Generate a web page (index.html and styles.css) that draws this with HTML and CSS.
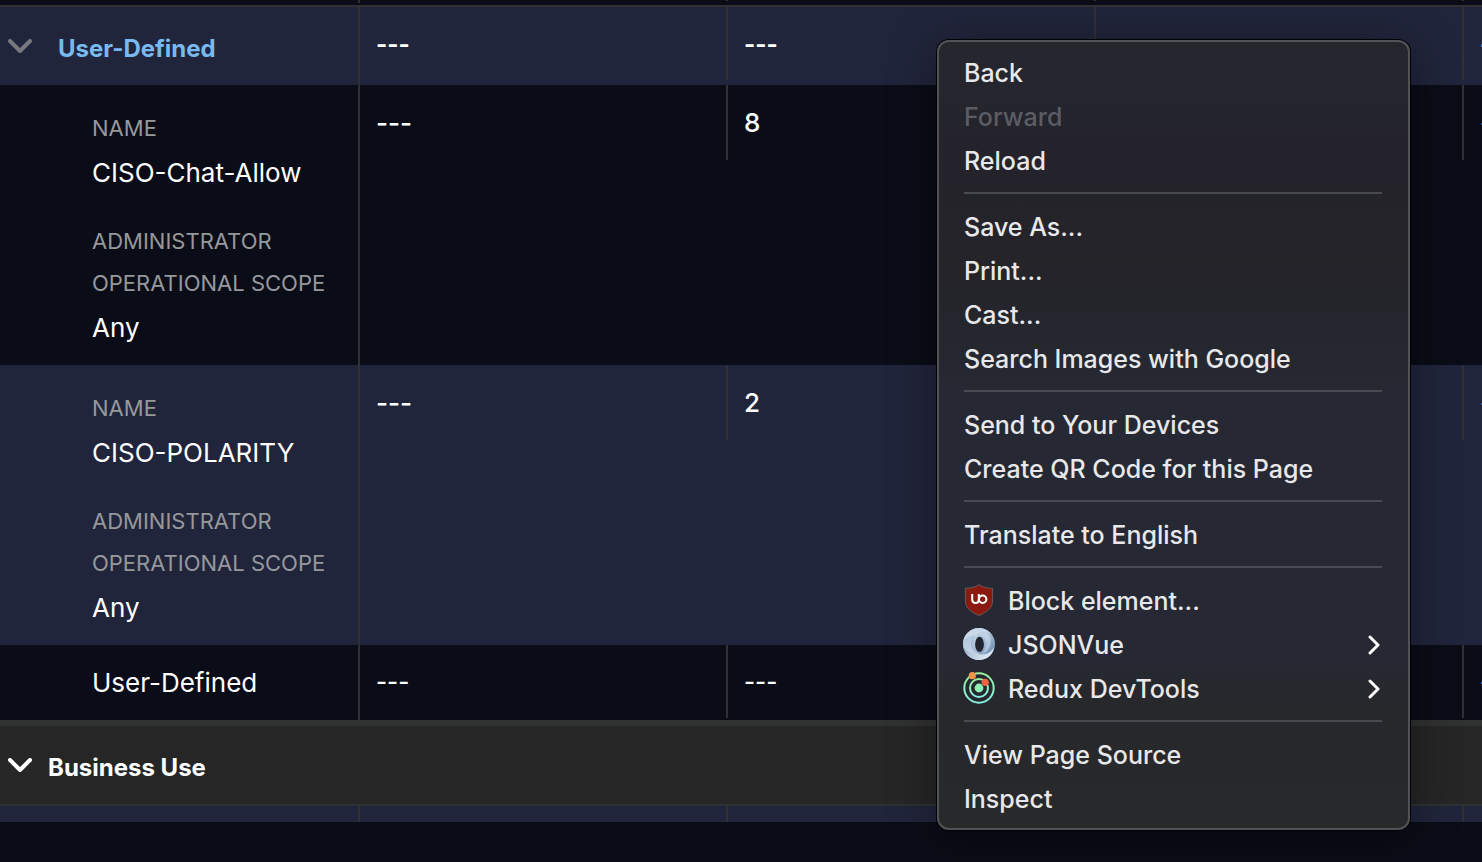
FILE: index.html
```html
<!DOCTYPE html>
<html lang="en">
<head>
<meta charset="utf-8">
<title>Policy Rules</title>
<link rel="stylesheet" href="styles.css">
</head>
<body>
<main class="viewport">
  <table class="grid">
    <colgroup><col class="col-name"><col class="col"><col class="col"><col class="col"><col class="col"></colgroup>
    <tbody>
      <tr class="stub"><td></td><td></td><td></td><td></td><td></td></tr>
      <tr class="group">
        <th scope="row">
          <button class="toggle" type="button" aria-expanded="true">
            <svg class="chevron chevron-dim" viewBox="0 0 24 14" aria-hidden="true"><path d="M2 2l10 10L22 2"/></svg>
            <span class="group-name">User-Defined</span>
          </button>
        </th>
        <td>---</td><td>---</td><td></td><td>---</td>
      </tr>
      <tr class="rule">
        <th scope="row">
          <dl class="props">
            <dt>NAME</dt><dd>CISO-Chat-Allow</dd>
            <dt>ADMINISTRATOR<br>OPERATIONAL SCOPE</dt><dd>Any</dd>
          </dl>
        </th>
        <td>---</td><td>8</td><td></td><td>---</td>
      </tr>
      <tr class="rule rule-alt">
        <th scope="row">
          <dl class="props">
            <dt>NAME</dt><dd>CISO-POLARITY</dd>
            <dt>ADMINISTRATOR<br>OPERATIONAL SCOPE</dt><dd>Any</dd>
          </dl>
        </th>
        <td>---</td><td>2</td><td></td><td>---</td>
      </tr>
      <tr class="single">
        <th scope="row">User-Defined</th>
        <td>---</td><td>---</td><td></td><td>---</td>
      </tr>
      <tr class="section">
        <th scope="rowgroup" colspan="5">
          <button class="toggle toggle-section" type="button" aria-expanded="true">
            <svg class="chevron" viewBox="0 0 24 14" aria-hidden="true"><path d="M2 2l10 10L22 2"/></svg>
            <span>Business Use</span>
          </button>
        </th>
      </tr>
      <tr class="peek"><td></td><td></td><td></td><td></td><td></td></tr>
    </tbody>
  </table>

  <div class="menu" role="menu">
    <button class="item" type="button" role="menuitem">Back</button>
    <button class="item" type="button" role="menuitem" disabled>Forward</button>
    <button class="item" type="button" role="menuitem">Reload</button>
    <hr class="rule-line">
    <button class="item" type="button" role="menuitem">Save As...</button>
    <button class="item" type="button" role="menuitem">Print...</button>
    <button class="item" type="button" role="menuitem">Cast...</button>
    <button class="item" type="button" role="menuitem">Search Images with Google</button>
    <hr class="rule-line">
    <button class="item" type="button" role="menuitem">Send to Your Devices</button>
    <button class="item" type="button" role="menuitem">Create QR Code for this Page</button>
    <hr class="rule-line">
    <button class="item" type="button" role="menuitem">Translate to English</button>
    <hr class="rule-line">
    <button class="item" type="button" role="menuitem">
      <svg class="icon" viewBox="0 0 32 32" aria-hidden="true">
        <path d="M16 .7C12.500 3.200 7.500 4.300 2.400 4.300V17c0 7.500 6.500 11.300 13.600 14.500C23.100 28.300 29.600 24.500 29.600 17V4.300C24.500 4.300 19.500 3.200 16 .7z" fill="#8a1a10" stroke="#6f6468" stroke-width=".8"/>
        <path d="M9.200 10v5.500a3.300 3.300 0 0 0 3.300 3.500c2 0 3.300-1.300 3.300-3.500V10" fill="none" stroke="#fff" stroke-width="2"/>
        <circle cx="19.700" cy="15.200" r="3.700" fill="none" stroke="#fff" stroke-width="2"/>
      </svg>
      <span>Block element...</span>
    </button>
    <button class="item" type="button" role="menuitem" aria-haspopup="true">
      <svg class="icon" viewBox="0 0 32 32" aria-hidden="true">
        <defs>
          <linearGradient id="ringA" x1="0" y1="0" x2="1" y2="1"><stop offset="0" stop-color="#e4edf6"/><stop offset=".5" stop-color="#a9bfd8"/><stop offset="1" stop-color="#54779f"/></linearGradient>
          <linearGradient id="ringB" x1="0" y1="0" x2="1" y2="1"><stop offset="0" stop-color="#5f84ad"/><stop offset=".5" stop-color="#b4c8de"/><stop offset="1" stop-color="#f1f6fb"/></linearGradient>
        </defs>
        <circle cx="16" cy="16" r="16" fill="url(#ringA)"/>
        <path d="M12 7.500C7.500 13 9 22 15 25.500c5 2.500 12 0 16-6C30 27 24 32 16 32 7 32 0 25 0 16 0 11 5 8 12 7.500z" fill="url(#ringB)"/>
        <path d="M0 16C0 7 7 0 16 0c5 0 10 2.500 12.500 6.500C22 3 14 4 10.500 9.500 7 15 8 22 12.500 26.500 5 25 0 21 0 16z" fill="#c9d9ea" opacity=".75"/>
        <path d="M17 6c7 2 8 14 2 20 8-2 12-14 6-20-2-1.500-5-1.500-8 0z" fill="#d4e1ef" opacity=".5"/>
        <ellipse cx="16.500" cy="16.300" rx="4.400" ry="7.600" fill="#23252e"/>
      </svg>
      <span>JSONVue</span>
      <svg class="arrow" viewBox="0 0 12 20" aria-hidden="true"><path d="M2 2l8 8-8 8"/></svg>
    </button>
    <button class="item" type="button" role="menuitem" aria-haspopup="true">
      <svg class="icon" viewBox="0 0 32 32" aria-hidden="true">
        <defs><linearGradient id="orbit" x1="0" y1="0" x2="0" y2="1"><stop offset="0" stop-color="#9bef9a"/><stop offset="1" stop-color="#83f0e4"/></linearGradient></defs>
        <g fill="none" stroke="url(#orbit)" stroke-width="2"><circle cx="16" cy="16" r="14.700"/><circle cx="16" cy="16" r="9"/></g>
        <circle cx="16" cy="16" r="4.400" fill="#8ff0b4"/>
        <circle cx="9.300" cy="3.700" r="3.600" fill="#f0934a"/>
        <circle cx="22.200" cy="10.300" r="3.600" fill="#ee6540"/>
      </svg>
      <span>Redux DevTools</span>
      <svg class="arrow" viewBox="0 0 12 20" aria-hidden="true"><path d="M2 2l8 8-8 8"/></svg>
    </button>
    <hr class="rule-line">
    <button class="item" type="button" role="menuitem">View Page Source</button>
    <button class="item" type="button" role="menuitem">Inspect</button>
  </div>
</main>
</body>
</html>
```
FILE: styles.css
```css
:root {
  --bg: #0a0c17;
  --row: #21253b;
  --line: #303231;
  --font: Inter, "Liberation Sans", sans-serif;
}

* { box-sizing: border-box; }

body {
  margin: 0;
  background: var(--bg);
  color: #fff;
  font-family: var(--font);
}

button {
  border: 0;
  padding: 0;
  background: none;
  color: inherit;
  font: inherit;
  text-align: left;
}

.viewport {
  position: relative;
  min-height: 100vh;
  overflow: hidden;
}

.grid {
  width: 100%;
  table-layout: fixed;
  border-collapse: separate;
  border-spacing: 0;
}

.col-name { width: 360px; }
.col { width: 368px; }

.grid th,
.grid td {
  padding: 0;
  font-size: 26px;
  font-weight: 400;
  line-height: 32px;
  text-align: left;
  vertical-align: top;
}

.grid td {
  padding: 22px 16px 0;
  background: linear-gradient(var(--line), var(--line)) right top / 2px 75px no-repeat;
}

/* The first two columns are divided by full-height lines on the name column. */
.grid th:first-child { border-right: 2px solid var(--line); }

.grid .stub td {
  height: 7px;
  padding: 0;
  border-bottom: 2px solid var(--line);
  background-size: 2px 1px;
}

.grid .stub td:first-child { background-size: 2px 3px; }

.group { background: var(--row); }
.group th { height: 78px; }
.grid .group td {
  font-size: 24px;
  font-weight: 700;
  background-size: 2px 73px;
}

.grid .rule td:nth-child(2),
.grid .rule td:nth-child(3) { font-weight: 500; }

.toggle {
  display: flex;
  align-items: center;
  gap: 26px;
  width: 100%;
  padding: 26px 8px 0;
  font-size: 24px;
  font-weight: 700;
  line-height: 32px;
}

.toggle-section { gap: 16px; }
.group-name { color: #78baf0; }

.chevron {
  width: 24px;
  height: 14px;
  margin-bottom: 6px;
  fill: none;
  stroke: #fff;
  stroke-width: 4;
  stroke-linecap: round;
  stroke-linejoin: round;
}

.chevron-dim { stroke: #77797e; }

.rule-alt { background: var(--row); }
.rule th { height: 280px; }

.props {
  margin: 0;
  padding: 22px 0 0 92px;
}

.props dt {
  color: #97989b;
  font-size: 22px;
  line-height: 42px;
}

.props dd {
  margin: 0 0 23px;
  line-height: 48px;
}

.props dd:last-child { margin-bottom: 0; }

.grid .single th {
  height: 75px;
  padding: 22px 0 0 92px;
}

.grid .single td {
  padding-top: 21px;
  font-size: 24px;
  font-weight: 500;
  background-size: 2px 73px;
}

.grid .section th {
  height: 86px;
  border-top: 6px solid var(--line);
  border-right: 0;
  border-bottom: 2px solid var(--line);
  background: #262626;
}

.peek { background: var(--row); }
.grid .peek td {
  height: 16px;
  padding: 0;
}

.menu {
  position: absolute;
  top: 40px;
  left: 937px;
  width: 473px;
  padding: 8px 26px 8px 25px;
  border: 2px solid #505256;
  border-radius: 12px;
  background: linear-gradient(#25272f, #24232c 14%, #242429 28%, #262933 45%, #262933 78%, #27282b 85%, #28292b);
  box-shadow: 0 0 0 1px #020308, 0 8px 48px rgba(0, 0, 0, .4);
  color: #e8e8ea;
}

.item {
  display: flex;
  align-items: center;
  gap: 13px;
  width: 100%;
  height: 44px;
  padding-top: 2px;
  font-size: 25px;
  font-weight: 500;
  line-height: 32px;
}

.item:disabled { color: #5c5c64; }

.rule-line {
  height: 2px;
  margin: 10px 0;
  border: 0;
  background: #494b52;
}

.icon {
  width: 32px;
  height: 32px;
  margin: 0 0 2px -1px;
}

.arrow {
  width: 12px;
  height: 20px;
  margin-left: auto;
  margin-right: 2px;
  fill: none;
  stroke: #fff;
  stroke-width: 3;
  stroke-linecap: round;
  stroke-linejoin: round;
}
```
